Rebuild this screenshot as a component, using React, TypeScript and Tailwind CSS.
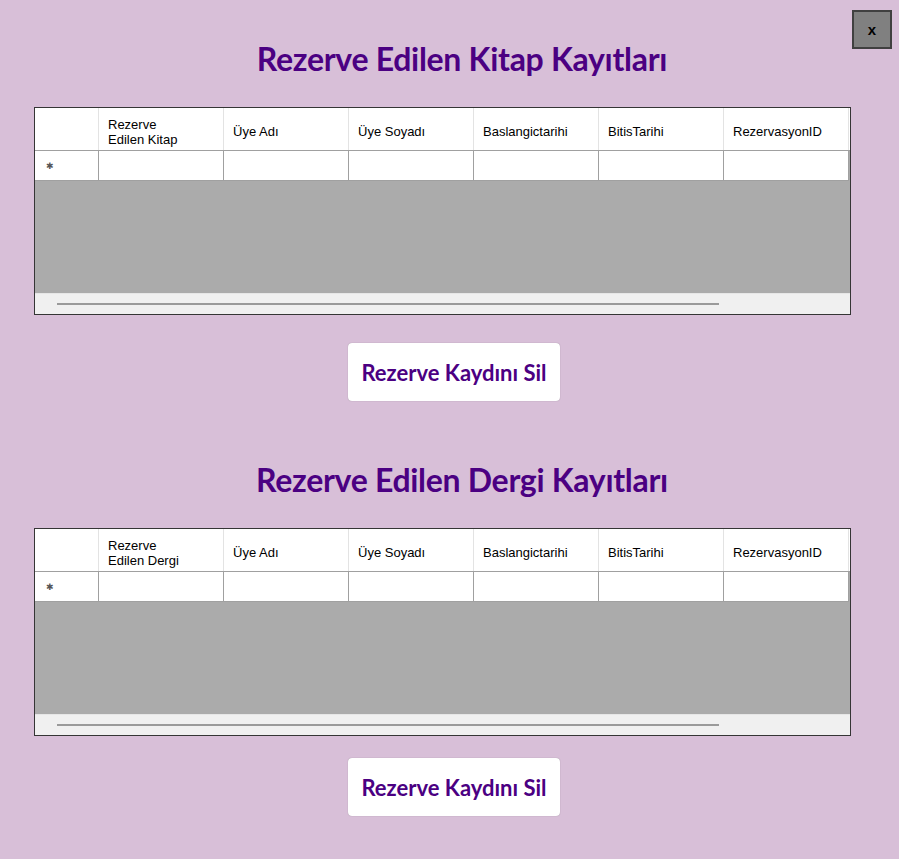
import { useState } from 'react';

interface RecordTableProps {
  firstColumn: string
}

const columns = ["Üye Adı", "Üye Soyadı", "Baslangictarihi", "BitisTarihi", "RezervasyonID"];

function RecordTable({ firstColumn }: RecordTableProps) {
  const headers = [firstColumn, ...columns];

  return (
    <div className="w-[817px] h-[208px] ml-[34px] border border-[#353535] flex flex-col bg-[#ababab]">
      {/* header row */}
      <div className="flex h-[43px] bg-white border-b border-[#a0a0a0] shrink-0">
        <div className="w-[64px] border-r border-[#e3e3e3]" />
        {headers.map((title) => (
          <div
            key={title}
            className="w-[125px] border-r border-[#e3e3e3] flex items-center pl-[9px] pt-[5px] text-[13px] leading-[15px] text-black"
            style={{ fontFamily: '"Liberation Sans", Arial, sans-serif' }}
          >
            {title.startsWith("Rezerve ") ? (
              <span>
                Rezerve<br />{title.replace("Rezerve ", "")}
              </span>
            ) : (
              title
            )}
          </div>
        ))}
      </div>

      {/* new row */}
      <div className="flex h-[30px] shrink-0">
        <div className="w-[64px] bg-white border-r border-b border-[#a0a0a0] flex items-center pl-[11px] pt-[2px]">
          <span className="text-[9px] text-[#555] leading-none" style={{ fontFamily: '"DejaVu Sans", sans-serif' }}>✱</span>
        </div>
        {headers.map((title) => (
          <div key={title} className="w-[125px] bg-white border-r border-b border-[#a0a0a0]" />
        ))}
      </div>

      <div className="flex-1" />

      {/* horizontal scrollbar */}
      <div className="h-[21px] bg-[#f0f0f0] border-t border-[#e6e6e6] shrink-0 flex items-center pl-[22px]">
        <div className="w-[662px] h-[2px] bg-[#9a9a9a]" />
      </div>
    </div>
  )
}

export default function App() {
  const [open, setOpen] = useState(true);

  return (
    <div
      className="relative w-[899px] h-[859px] bg-[#d8bfd8] flex flex-col pt-[40px] overflow-hidden"
      style={{ fontFamily: 'Lato, "Open Sans", sans-serif' }}
    >
      <button
        className="absolute right-[7px] top-[10px] w-[40px] h-[39px] bg-[#808080] border-2 border-[#404040] text-black font-bold text-[15px] leading-none"
        style={{ fontFamily: '"Liberation Sans", Arial, sans-serif' }}
        onClick={() => setOpen(!open)}
      >
        x
      </button>

      <h1 className="h-[36px] leading-[38px] text-center pl-[25px] text-[32px] font-bold text-[#4b0082] tracking-[-0.3px]">
        Rezerve Edilen Kitap Kayıtları
      </h1>

      <div className="mt-[31px]">
        <RecordTable firstColumn="Rezerve Edilen Kitap" />
      </div>

      <button className="mt-[28px] ml-[348px] w-[212px] h-[58px] bg-white rounded-[4px] shadow-[0_0_1px_rgba(0,0,0,0.35)] text-[22px] font-bold text-[#4b0082]">
        Rezerve Kaydını Sil
      </button>

      <h1 className="mt-[60px] h-[36px] leading-[38px] text-center pl-[25px] text-[32px] font-bold text-[#4b0082] tracking-[-0.3px]">
        Rezerve Edilen Dergi Kayıtları
      </h1>

      <div className="mt-[31px]">
        <RecordTable firstColumn="Rezerve Edilen Dergi" />
      </div>

      <button className="mt-[22px] ml-[348px] w-[212px] h-[58px] bg-white rounded-[4px] shadow-[0_0_1px_rgba(0,0,0,0.35)] text-[22px] font-bold text-[#4b0082]">
        Rezerve Kaydını Sil
      </button>
    </div>
  )
}
